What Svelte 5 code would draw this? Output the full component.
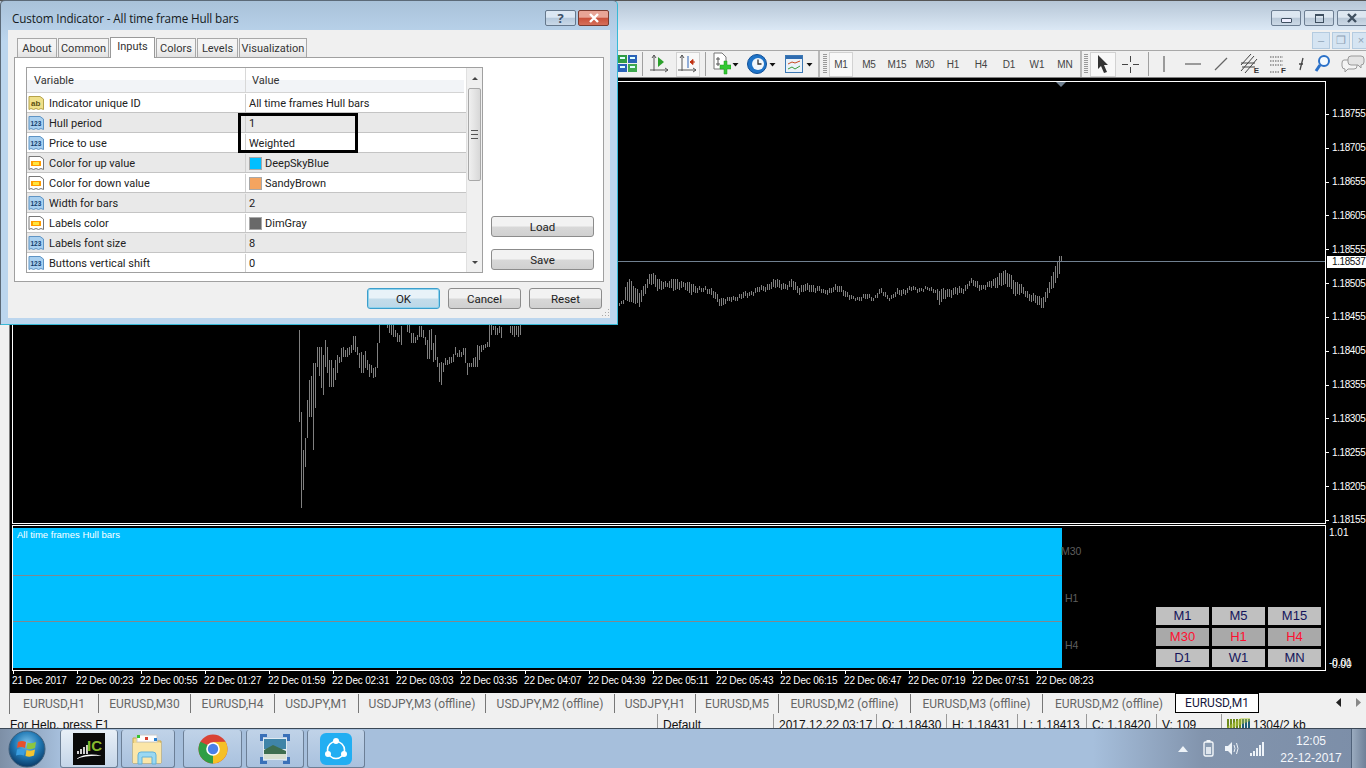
<script>
  const rows = [
    { icon: 'ab', name: 'Indicator unique ID', value: 'All time frames Hull bars' },
    { icon: 'num', name: 'Hull period', value: '1' },
    { icon: 'num', name: 'Price to use', value: 'Weighted' },
    { icon: 'color', name: 'Color for up value', value: 'DeepSkyBlue', swatch: '#00bfff' },
    { icon: 'color', name: 'Color for down value', value: 'SandyBrown', swatch: '#f4a460' },
    { icon: 'num', name: 'Width for bars', value: '2' },
    { icon: 'color', name: 'Labels color', value: 'DimGray', swatch: '#696969' },
    { icon: 'num', name: 'Labels font size', value: '8' },
    { icon: 'num', name: 'Buttons vertical shift', value: '0' }
  ];
  const dialogTabs = [
    { label: 'About', w: 40 }, { label: 'Common', w: 51 }, { label: 'Inputs', w: 45, active: true },
    { label: 'Colors', w: 40 }, { label: 'Levels', w: 41 }, { label: 'Visualization', w: 68 }
  ];
  const periods = ['M1', 'M5', 'M15', 'M30', 'H1', 'H4', 'D1', 'W1', 'MN'];
  const prices = ['1.18755', '1.18705', '1.18655', '1.18605', '1.18555', '1.18505', '1.18455', '1.18405', '1.18355', '1.18305', '1.18255', '1.18205', '1.18155'];
  const times = ['21 Dec 2017', '22 Dec 00:23', '22 Dec 00:55', '22 Dec 01:27', '22 Dec 01:59', '22 Dec 02:31', '22 Dec 03:03', '22 Dec 03:35', '22 Dec 04:07', '22 Dec 04:39', '22 Dec 05:11', '22 Dec 05:43', '22 Dec 06:15', '22 Dec 06:47', '22 Dec 07:19', '22 Dec 07:51', '22 Dec 08:23'];
  const chartTabs = [
    { label: 'EURUSD,H1', w: 89 }, { label: 'EURUSD,M30', w: 92 }, { label: 'EURUSD,H4', w: 84 }, { label: 'USDJPY,M1', w: 84 },
    { label: 'USDJPY,M3 (offline)', w: 127 }, { label: 'USDJPY,M2 (offline)', w: 129 }, { label: 'USDJPY,H1', w: 81 }, { label: 'EURUSD,M5', w: 83 },
    { label: 'EURUSD,M2 (offline)', w: 132 }, { label: 'EURUSD,M3 (offline)', w: 132 }, { label: 'EURUSD,M2 (offline)', w: 132 }
  ];
  const buttons = [
    { label: 'M1' }, { label: 'M5' }, { label: 'M15' },
    { label: 'M30', on: true }, { label: 'H1', on: true }, { label: 'H4', on: true },
    { label: 'D1' }, { label: 'W1' }, { label: 'MN' }
  ];
  const status = [
    { text: '2017.12.22 03:17', w: 103 }, { text: 'O: 1.18430', w: 70 }, { text: 'H: 1.18431', w: 71 },
    { text: 'L: 1.18413', w: 69 }, { text: 'C: 1.18420', w: 70 }, { text: 'V: 109', w: 65 }
  ];

  // early bars read off the screenshot: [x, top, bottom] in zoomed pixels
  const early = [[58,270,545],[64,515,805],[70,630,750],[76,595,680],[82,480,595],[88,420,530],[94,408,530],[100,370,630],[106,370,505],[112,320,380],[118,322,408],[124,320,445],[130,345,465],[136,300,380],[142,320,400],[148,360,440],[154,360,440],[160,385,440],[166,360,420],[172,345,400],[178,350,370],[184,325,365],[190,322,350],[196,330,350],[202,325,350],[208,320,345],[214,315,340],[220,288,330],[226,288,335],[232,320,345],[238,340,385],[244,335,398],[250,345,400],[256,333,385],[262,360,390],[268,372,412],[274,375,400],[280,385,415],[286,380,410],[292,310,385],[298,255,310],[322,255,265],[328,255,280],[334,255,285],[340,255,290],[346,270,290],[352,280,305],[358,285,305],[364,258,315],[382,255,275],[388,255,280],[394,278,310],[400,280,310],[406,290,310],[412,285,300],[418,258,290],[424,258,290],[430,270,295],[436,290,315],[442,300,358],[448,270,358],[454,268,330],[460,310,365],[466,285,360],[472,350,380],[478,368,425],[484,365,435],[490,368,395],[496,355,375],[502,360,375],[508,352,372],[514,350,368],[520,342,365],[526,320,345],[532,340,352],[538,330,352],[544,335,352],[550,325,345],[556,325,370],[562,368,405],[568,368,382],[574,368,382],[580,355,380],[586,350,380],[592,315,380],[598,318,360],[604,315,335],[610,315,330],[616,312,325],[622,305,320],[628,255,320],[634,255,285],[640,258,270],[646,258,285],[652,265,285],[658,258,278],[664,260,295],[690,258,280],[696,258,285],[702,258,290],[708,258,285],[714,258,292],[720,255,285]];
  // later bars as a control line: [x, middle, half height]
  const late = [[27,197,4],[40,185,5],[47,155,25],[57,147,35],[70,165,25],[88,180,20],[100,150,15],[115,122,14],[125,117,17],[140,130,18],[170,138,6],[190,130,18],[220,138,8],[240,140,18],[260,152,7],[285,145,6],[305,160,10],[330,185,12],[350,182,7],[380,172,6],[400,168,8],[430,155,6],[470,142,8],[500,130,13],[530,142,6],[545,130,14],[565,150,10],[600,142,10],[640,155,6],[690,145,10],[720,175,6],[750,175,5],[770,170,8],[790,175,5],[810,155,8],[840,175,5],[860,160,9],[900,148,6],[950,148,5],[975,150,5],[985,175,22],[1010,158,12],[1040,155,10],[1060,150,8],[1080,125,8],[1100,135,10],[1120,143,6],[1150,128,12],[1180,115,22],[1200,120,20],[1215,148,22],[1240,150,10],[1260,175,10],[1300,185,16],[1315,150,15],[1330,115,25],[1348,68,26],[1354,58,6]];

  function lateBar(u) {
    let i = 0;
    while (i < late.length - 2 && late[i + 1][0] < u) i++;
    const [a, m1, h1] = late[i];
    const [b, m2, h2] = late[i + 1];
    const t = (u - a) / (b - a);
    const wobble = Math.sin(u * 0.37) * 3 + Math.sin(u * 0.91) * 3;
    return [m1 + (m2 - m1) * t + wobble, h1 + (h2 - h1) * t];
  }

  let barsPath = '';
  for (const [u, top, bottom] of early) {
    const x = 280 + Math.round(u / 3) + 0.5;
    barsPath += `M${x} ${240 + Math.round(top / 3)}V${240 + Math.round(bottom / 3)}`;
  }
  for (let u = 27; u <= 1354; u += 6) {
    const [mid, half] = lateBar(u);
    const x = 610 + Math.round(u / 3) + 0.5;
    barsPath += `M${x} ${240 + Math.round((mid - half) / 3)}V${240 + Math.round((mid + half) / 3)}`;
  }
</script>

{#snippet rowIcon(kind)}
  <svg class="row-icon" width="17" height="16" viewBox="0 0 17 16">
    {#if kind === 'ab'}
      <path d="M1 1.5H12L15.5 4V14.5L13 13.5L10.5 14.5L8 13.5L5.5 14.5L3 13.5L1 14.5Z" fill="#efe08a" stroke="#b5a24a" />
      <text x="3" y="11" class="ic-ab">ab</text>
    {:else if kind === 'num'}
      <path d="M1 1.5H12L15.5 4V14.5L13 13.5L10.5 14.5L8 13.5L5.5 14.5L3 13.5L1 14.5Z" fill="#a9d0f0" stroke="#5f94c4" />
      <text x="2.5" y="11" class="ic-num">123</text>
    {:else}
      <path d="M1 1.5H12L15.5 4V14.5L13 13.5L10.5 14.5L8 13.5L5.5 14.5L3 13.5L1 14.5Z" fill="#fff" stroke="#777" />
      <rect x="3" y="6" width="10" height="5" fill="#ff9c00" />
      <rect x="5" y="7" width="6" height="3" fill="#ffe640" />
    {/if}
  </svg>
{/snippet}

{#snippet caret()}
  <svg class="caret" width="8" height="27" viewBox="0 0 8 27"><path d="M0.5 12H6.5L3.5 15.5Z" fill="#111" /></svg>
{/snippet}

<div class="app">
  <header class="titlebar">
    <div class="win-btns">
      <button class="win-btn"><span class="glyph-min"></span></button>
      <button class="win-btn"><span class="glyph-max"></span></button>
      <button class="win-btn close"><svg width="12" height="10" viewBox="0 0 12 10"><path d="M2 1L10 9M10 1L2 9" stroke="#3f4f60" stroke-width="2.4" /></svg></button>
    </div>
  </header>

  <div class="menubar">
    <div class="mdi-btns">
      <span class="mdi">–</span>
      <span class="mdi">❐</span>
      <span class="mdi">×</span>
    </div>
  </div>

  <div class="toolbar">
    <div class="tool" style="width:20px">
      <svg width="19" height="18" viewBox="0 0 19 18">
        <rect x="0" y="0" width="9" height="8" fill="#2f9c44" /><rect x="10" y="0" width="9" height="8" fill="#2a62b8" />
        <rect x="0" y="9" width="9" height="8" fill="#2a62b8" /><rect x="10" y="9" width="9" height="8" fill="#3fa84f" />
        <path d="M2 3H7M12 3H17M2 12H7M12 12H17" stroke="#dff" stroke-width="2" />
      </svg>
    </div>
    <span class="sep" style="margin-left:5px"></span>
    <div class="tool" style="width:24px;margin-left:5px">
      <svg width="22" height="22" viewBox="0 0 22 22">
        <path d="M5 2V18M1 17H19M5 2L3 5M5 2L7 5M19 17L16 15M19 17L16 19" stroke="#555" fill="none" />
        <path d="M9 4L15 9L9 14Z" fill="#2ca02c" />
      </svg>
    </div>
    <div class="tool on" style="width:24px;margin-left:4px">
      <svg width="22" height="22" viewBox="0 0 22 22">
        <path d="M5 2V18M1 17H19M5 2L3 5M5 2L7 5M19 17L16 15M19 17L16 19" stroke="#555" fill="none" />
        <path d="M11 3V15" stroke="#2a62b8" /><path d="M18 9H13M13 9L16 6.5V11.5Z" stroke="#c03010" fill="#c03010" />
      </svg>
    </div>
    <span class="sep" style="margin-left:5px"></span>
    <div class="tool" style="width:22px;margin-left:4px">
      <svg width="20" height="24" viewBox="0 0 20 24">
        <path d="M3 1H11L15 5V17H3Z" fill="#fff" stroke="#777" />
        <path d="M7 5V14M5 7H9M5 12H9" stroke="#555" />
        <path d="M9 13H13V9H16V13H20V17H16V22H13V17H9Z" fill="#32c832" stroke="#1c9a1c" stroke-width="0.5" />
      </svg>
    </div>
    {@render caret()}
    <div class="tool" style="width:22px;margin-left:7px">
      <svg width="22" height="24" viewBox="0 0 22 24">
        <circle cx="10" cy="12" r="9.5" fill="#1f74c8" stroke="#0f4f98" />
        <circle cx="11" cy="12" r="6" fill="#f2f7fb" />
        <path d="M11 7.5V12H14.5" stroke="#333" stroke-width="1.3" fill="none" />
      </svg>
    </div>
    {@render caret()}
    <div class="tool" style="width:22px;margin-left:7px">
      <svg width="20" height="19" viewBox="0 0 20 19">
        <rect x="0.5" y="0.5" width="17" height="17" fill="#eaf2f9" stroke="#3c78b4" />
        <rect x="1" y="1" width="16" height="3" fill="#2f6cb0" />
        <path d="M3 9L7 7L10 8L15 6" stroke="#c84a20" fill="none" />
        <path d="M3 14L7 12L10 14L15 11" stroke="#3a9a3a" fill="none" />
      </svg>
    </div>
    {@render caret()}
    <span class="sep thick" style="margin-left:4px"></span>
    <span class="grip" style="margin-left:3px"></span>
    <div class="periods">
      {#each periods as p, i}
        <div class="period" class:on={i === 0}>{p}</div>
      {/each}
    </div>
    <span class="sep thick" style="margin-left:1px"></span>
    <span class="grip" style="margin-left:2px"></span>
    <div class="tool on" style="width:26px;margin-left:2px">
      <svg width="14" height="20" viewBox="0 0 14 20"><path d="M2 1L12 11H8L11 18L8 19L5 12L2 15Z" fill="#333" /></svg>
    </div>
    <div class="tool" style="width:27px;margin-left:1px">
      <svg width="19" height="19" viewBox="0 0 19 19"><path d="M9.5 1V7M9.5 12V18M1 9.5H7M12 9.5H18" stroke="#444" /></svg>
    </div>
    <span class="sep" style="margin-left:4px"></span>
    <div class="tool" style="width:24px;margin-left:3px">
      <svg width="4" height="18" viewBox="0 0 4 18"><path d="M2 1V17" stroke="#444" /></svg>
    </div>
    <div class="tool" style="width:28px;margin-left:3px">
      <svg width="18" height="4" viewBox="0 0 18 4"><path d="M1 2H17" stroke="#444" /></svg>
    </div>
    <div class="tool" style="width:28px">
      <svg width="14" height="14" viewBox="0 0 14 14"><path d="M1 13L13 1" stroke="#666" stroke-width="1.2" /></svg>
    </div>
    <div class="tool fib" style="width:28px">
      <svg width="20" height="22" viewBox="0 0 20 22"><path d="M2 18L15 3M2 12L12 1M6 20L18 6M2 10H16M3 14H16" stroke="#444" fill="none" /></svg>
      <span class="fib-letter">E</span>
    </div>
    <div class="tool fib" style="width:28px">
      <svg width="18" height="20" viewBox="0 0 18 20"><path d="M2 3H15M2 7H15M2 11H15M2 18H12" stroke="#555" stroke-dasharray="1.5 1" /></svg>
      <span class="fib-letter f">F</span>
    </div>
    <div class="tool" style="width:22px">
      <svg width="8" height="14" viewBox="0 0 8 14"><path d="M5 1L2 13M1 7H5" stroke="#444" stroke-width="1.3" /></svg>
    </div>
    <div class="tool" style="width:18px">
      <svg width="17" height="20" viewBox="0 0 17 20"><circle cx="10" cy="7" r="5" fill="#f4faff" stroke="#2a70c8" stroke-width="2" /><path d="M6 11L2 17" stroke="#2a70c8" stroke-width="3" /></svg>
    </div>
    <div class="tool" style="width:26px;margin-left:9px">
      <svg width="24" height="20" viewBox="0 0 24 20">
        <path d="M3 6H13Q16 6 16 9V12Q16 15 13 15H7L4 18V15Q1 15 1 12V9Q1 6 3 6Z" fill="#f4f4f4" stroke="#999" />
        <path d="M10 2H20Q23 2 23 5V8Q23 11 20 11V14L17 11H10Q7 11 7 8V5Q7 2 10 2Z" fill="#e4e4e4" stroke="#999" />
      </svg>
    </div>
  </div>

  <div class="workspace">
    <div class="dock"></div>
    <div class="charts">
      <div class="pane main-pane">
        <div class="plot">
          <svg class="price-svg" width="1312" height="441" viewBox="13 82 1312 441">
            <path d={barsPath} stroke="#808080" fill="none" shape-rendering="crispEdges" />
            <path d="M13 261.5H1325" stroke="#708090" shape-rendering="crispEdges" />
            <path d="M1056 82H1066L1061 87Z" fill="#708090" />
          </svg>
        </div>
        <div class="axis">
          {#each prices as p}
            <div class="tick">{p}</div>
          {/each}
          <div class="bid">1.18537</div>
        </div>
      </div>
      <div class="pane sub-pane">
        <div class="plot sub-plot">
          <div class="hull">
            <div class="hull-row first"><span class="hull-name">All time frames Hull bars</span></div>
            <div class="hull-row middle"></div>
            <div class="hull-row last"></div>
          </div>
          <div class="hull-labels">
            <span class="m30">M30</span>
            <span>H1</span>
            <span>H4</span>
          </div>
          <div class="tf-buttons">
            {#each buttons as b}
              <div class="tf" class:on={b.on}>{b.label}</div>
            {/each}
          </div>
        </div>
        <div class="axis sub-axis">
          <span>1.01</span>
          <span class="low"><span class="over">0.00</span>-0.01</span>
        </div>
      </div>
      <div class="time-axis">
        {#each times as t}
          <div class="time">{t}</div>
        {/each}
      </div>
    </div>
  </div>

  <div class="chart-tabs">
    <div class="tabs-spacer"></div>
    {#each chartTabs as t}
      <div class="chart-tab" style="width:{t.w}px">{t.label}</div>
    {/each}
    <div class="chart-tab current">EURUSD,M1</div>
    <div class="tab-arrows">
      <svg width="6" height="9" viewBox="0 0 6 9"><path d="M5 0V9L0 4.5Z" fill="#222" /></svg>
      <svg width="6" height="9" viewBox="0 0 6 9"><path d="M1 0V9L6 4.5Z" fill="#888" /></svg>
    </div>
  </div>

  <div class="statusbar">
    <span class="st help">For Help, press F1</span>
    <span class="st dflt">Default</span>
    {#each status as s}
      <span class="st" style="width:{s.w}px">{s.text}</span>
    {/each}
    <span class="st net">
      <svg width="23" height="12" viewBox="0 0 23 12">
        <path d="M1 12V1M4 12V1M7 12V1M10 12V1M13 12V1" stroke="#6d8a1c" stroke-width="2" />
        <path d="M16 12V1M19 12V1M22 12V1" stroke="#1f5f78" stroke-width="2" />
        <path d="M0 12L23 3V0H14L0 9Z" fill="#b5c93a" opacity="0.5" />
      </svg>
      1304/2 kb
    </span>
  </div>

  <footer class="taskbar">
    <div class="orb-area">
      <svg width="38" height="38" viewBox="0 0 38 38">
        <defs>
          <radialGradient id="orb" cx="50%" cy="35%" r="65%"><stop offset="0" stop-color="#7ec3ea" /><stop offset="0.55" stop-color="#1f78b4" /><stop offset="1" stop-color="#0c3a66" /></radialGradient>
        </defs>
        <circle cx="19" cy="19" r="18" fill="url(#orb)" stroke="#3e5e7a" />
        <path d="M10 12Q14 10 18 12L17 18Q13 16 9 18Z" fill="#e8502c" />
        <path d="M19.5 12.5Q24 14 28 12L27 18Q23 20 18.5 18.5Z" fill="#8cc63f" />
        <path d="M9 19.5Q13 18 17 19.5L16 25.5Q12 24 8 25.5Z" fill="#3a9ee0" />
        <path d="M18.5 20Q23 21.5 27 19.5L26 25.5Q22 27.5 17.5 26Z" fill="#f4c430" />
      </svg>
    </div>
    <div class="task current">
      <svg width="32" height="32" viewBox="0 0 32 32">
        <rect width="32" height="32" fill="#0a0a0a" />
        <path d="M5 18V21M8 16V21M11 14V21M14 12V21" stroke="#d0d0d0" stroke-width="2" />
        <text x="14" y="18" class="ic-logo">IC</text>
        <path d="M3 26Q14 19 29 23Q15 22 3 26Z" fill="#fff" />
      </svg>
    </div>
    <div class="task folder">
      <svg width="32" height="32" viewBox="0 0 32 32">
        <path d="M1 5H12L14 8H29V30H1Z" fill="#f3d98b" stroke="#c9a84e" />
        <rect x="5" y="2" width="20" height="7" fill="#fff" stroke="#ccc" />
        <rect x="5" y="2" width="3" height="3" fill="#31c431" /><rect x="13" y="4" width="3" height="3" fill="#d84030" /><rect x="22" y="5" width="3" height="3" fill="#2a80d0" />
        <path d="M1 10H29V30H1Z" fill="#fbe6a8" />
        <path d="M6 31V22Q6 19 9 19H21Q24 19 24 22V31H20V24H10V31Z" fill="#9ad8f2" stroke="#63b1d8" />
      </svg>
    </div>
    <div class="task chrome">
      <svg width="30" height="30" viewBox="-15 -15 30 30">
        <circle r="14.5" fill="#d94335" />
        <path d="M-12.6 -7.2A14.5 14.5 0 0 0 0 14.5L7 2Z" fill="#2f9e44" />
        <path d="M0 14.5A14.5 14.5 0 0 0 12.6 -7.2L0 -7Z" fill="#f6c026" />
        <circle r="6.8" fill="#fff" /><circle r="5.2" fill="#4a80e8" />
      </svg>
    </div>
    <div class="task photos">
      <svg width="32" height="32" viewBox="0 0 32 32">
        <rect x="4" y="5" width="24" height="22" fill="#dfeaf2" />
        <rect x="5" y="6" width="22" height="10" fill="#3f84a8" />
        <path d="M5 17L14 12L27 18V26H5Z" fill="#3d6e50" />
        <rect x="5" y="21" width="22" height="5" fill="#d7dfd0" />
        <path d="M1 8V1H8V4H4V8ZM24 1H31V8H28V4H24ZM1 24H4V28H8V31H1ZM28 24H31V31H24V28H28Z" fill="#3a70b8" />
      </svg>
    </div>
    <div class="task">
      <svg width="32" height="32" viewBox="0 0 32 32">
        <rect width="32" height="32" rx="6" fill="#22aef2" />
        <circle cx="16" cy="17" r="8.5" fill="none" stroke="#fff" stroke-width="1.6" />
        <circle cx="16" cy="8" r="3" fill="#fff" /><circle cx="8" cy="21" r="3" fill="#fff" /><circle cx="24" cy="21" r="3" fill="#fff" />
      </svg>
    </div>
    <div class="tray">
      <svg width="10" height="6" viewBox="0 0 10 6"><path d="M5 0L10 6H0Z" fill="#eef3f8" /></svg>
      <svg class="t-batt" width="11" height="17" viewBox="0 0 11 17"><rect x="1" y="2" width="9" height="14" rx="1.5" fill="#8a9cb2" stroke="#f4f7fa" stroke-width="1.4" /><rect x="3.5" y="0" width="4" height="2" fill="#f4f7fa" /><rect x="3" y="7" width="5" height="7" fill="#dfe6ee" /></svg>
      <svg class="t-vol" width="16" height="15" viewBox="0 0 16 15"><path d="M1 5H4L8 1V14L4 10H1Z" fill="#eef3f8" /><path d="M10 4Q12 7.5 10 11M12.5 2Q15.5 7.5 12.5 13" stroke="#eef3f8" fill="none" /></svg>
      <svg class="t-net" width="16" height="14" viewBox="0 0 16 14"><path d="M1 11H3V14H1ZM4 9H6V14H4ZM7 6H9V14H7ZM10 3H12V14H10ZM13 0H15V14H13Z" fill="#eef3f8" /></svg>
      <div class="clock"><span>12:05</span><span>22-12-2017</span></div>
      <div class="show-desktop"></div>
    </div>
  </footer>

  <div class="dialog">
    <div class="dlg-title">
      <span>Custom Indicator - All time frame Hull bars</span>
      <div class="dlg-btns">
        <button class="dlg-btn help-btn">?</button>
        <button class="dlg-btn close-btn"><svg width="12" height="10" viewBox="0 0 12 10"><path d="M2 1L10 9M10 1L2 9" stroke="#fff" stroke-width="2.4" /></svg></button>
      </div>
    </div>
    <div class="dlg-body">
      <div class="dlg-tabs">
        {#each dialogTabs as t}
          <div class="dlg-tab" class:active={t.active} style="width:{t.w}px">{t.label}</div>
        {/each}
      </div>
      <div class="panel">
        <div class="list">
          <div class="list-main">
            <div class="list-head">
              <div class="col-name">Variable</div>
              <div class="col-value">Value</div>
            </div>
            {#each rows as r}
              <div class="list-row">
                <div class="cell-name">{@render rowIcon(r.icon)}<span>{r.name}</span></div>
                <div class="cell-value">
                  {#if r.swatch}<i class="swatch" style="background:{r.swatch}"></i>{/if}
                  <span>{r.value}</span>
                </div>
              </div>
            {/each}
          </div>
          <div class="scroll">
            <svg width="16" height="20" viewBox="0 0 16 20"><path d="M5 12H11L8 9Z" fill="#444" /></svg>
            <div class="thumb"><span class="thumb-grip"></span></div>
            <svg class="scroll-down" width="16" height="20" viewBox="0 0 16 20"><path d="M5 9H11L8 12Z" fill="#444" /></svg>
          </div>
        </div>
        <div class="side">
          <button class="btn wide">Load</button>
          <button class="btn wide">Save</button>
        </div>
      </div>
      <div class="dlg-actions">
        <button class="btn default">OK</button>
        <button class="btn">Cancel</button>
        <button class="btn">Reset</button>
      </div>
      <svg class="resize" width="10" height="10" viewBox="0 0 10 10"><path d="M8 1h1v1H8zM5 4h1v1H5zM8 4h1v1H8zM2 7h1v1H2zM5 7h1v1H5zM8 7h1v1H8z" fill="#aaa" /></svg>
    </div>
    <div class="highlight"></div>
  </div>
</div>

<style>
  :global(body) { margin: 0; background: #000; }
  button { font: inherit; padding: 0; }

  .app {
    position: relative;
    width: 1366px;
    height: 768px;
    overflow: hidden;
    display: flex;
    flex-direction: column;
    font-family: "Liberation Sans", Arial, sans-serif;
    font-size: 11px;
    color: #222;
  }

  .titlebar {
    height: 30px;
    flex-shrink: 0;
    display: flex;
    justify-content: flex-end;
    box-sizing: border-box;
    padding-top: 9px;
    border-top: 1px solid #555;
    background: linear-gradient(#b6c6d6, #dbe8f5);
  }
  .win-btns { display: flex; gap: 3px; margin-right: -6px; }
  .win-btn {
    width: 30px;
    height: 16px;
    display: flex;
    align-items: center;
    justify-content: center;
    border: 1px solid #6d7e92;
    border-radius: 2px;
    background: linear-gradient(#dde7f1 45%, #b9c8d8 50%, #ccd9e6);
  }
  .win-btn.close { width: 35px; padding-right: 6px; }
  .glyph-min { width: 9px; height: 3px; border: 1px solid #3f4f60; background: #eef; border-radius: 1px; margin-top: 4px; }
  .glyph-max { width: 7px; height: 6px; border: 1px solid #3f4f60; border-top-width: 2px; }

  .menubar {
    height: 20px;
    flex-shrink: 0;
    background: #f0f0f0;
    display: flex;
    justify-content: flex-end;
    padding-top: 2px;
    box-sizing: border-box;
  }
  .mdi-btns { display: flex; gap: 2px; margin-right: -4px; }
  .mdi {
    width: 16px;
    height: 15px;
    text-align: center;
    line-height: 15px;
    font-size: 11px;
    color: #8fa3b6;
    border: 1px solid #b4cbe0;
    background: #d5e4f2;
    box-sizing: content-box;
  }

  .toolbar {
    height: 28px;
    flex-shrink: 0;
    box-sizing: border-box;
    padding-left: 617px;
    display: flex;
    align-items: center;
    background: #f0f0f0;
    border-top: 1px solid #a8a8a8;
    border-bottom: 1px solid #808080;
  }
  .tool {
    height: 25px;
    flex-shrink: 0;
    box-sizing: border-box;
    display: flex;
    align-items: center;
    justify-content: center;
    position: relative;
  }
  .tool.on, .period.on {
    background: #f8f8f8;
    border: 1px solid #d2d2d2;
  }
  .caret { flex-shrink: 0; }
  .sep { width: 1px; height: 24px; background: #a0a0a0; flex-shrink: 0; }
  .sep.thick { width: 2px; height: 26px; background: #b8b8b8; }
  .grip {
    width: 4px;
    height: 20px;
    flex-shrink: 0;
    background: repeating-linear-gradient(#999 0 1px, transparent 1px 2px);
  }
  .periods { display: flex; margin-left: 0; }
  .period {
    width: 28px;
    height: 25px;
    box-sizing: border-box;
    display: flex;
    align-items: center;
    justify-content: center;
    font-size: 10px;
    color: #444;
    letter-spacing: -0.1px;
  }
  .period.on { width: 24px; margin: 0 2px; }
  .fib-letter { position: absolute; right: 4px; bottom: 2px; font-size: 8px; font-weight: 700; color: #333; }
  .fib-letter.f { right: 5px; }

  .workspace { flex: 1; display: flex; min-height: 0; background: #000; }
  .dock { width: 9px; flex-shrink: 0; background: #f0f0f0; border-right: 1px solid #7c7c7c; }
  .charts { flex: 1; padding: 3px 0 0 2px; min-width: 0; color: #fff; }
  .pane { display: flex; }
  .main-pane { height: 443px; margin-bottom: 1px; }
  .sub-pane { height: 146px; }
  .plot {
    width: 1314px;
    flex-shrink: 0;
    box-sizing: border-box;
    border: 1px solid #fff;
    position: relative;
    overflow: hidden;
  }
  .price-svg { display: block; }
  .axis {
    flex: 1;
    position: relative;
    padding-top: 16px;
    font-size: 10px;
    letter-spacing: -0.4px;
  }
  .tick {
    height: 33.83px;
    display: flex;
    align-items: center;
    padding-left: 6px;
    position: relative;
  }
  .tick::before {
    content: "";
    position: absolute;
    left: 0;
    top: 50%;
    width: 3px;
    height: 1px;
    background: #fff;
  }
  .bid {
    position: absolute;
    left: 1px;
    right: 0;
    top: 175px;
    height: 12px;
    line-height: 12px;
    padding-left: 5px;
    background: #fff;
    color: #111;
  }
  .sub-plot { display: flex; padding-top: 2px; }
  .hull {
    width: 1049px;
    height: 140px;
    flex-shrink: 0;
    display: flex;
    flex-direction: column;
    background: #00bfff;
  }
  .hull-row { flex-shrink: 0; box-sizing: border-box; }
  .hull-row.first { height: 48px; border-bottom: 1px solid #808890; }
  .hull-row.middle { height: 45px; }
  .hull-row.last { height: 47px; border-top: 1px solid #808890; }
  .hull-name { display: block; padding: 0 0 0 4px; font-size: 9.5px; line-height: 13px; color: #fff; }
  .hull-labels {
    position: absolute;
    left: 1048px;
    top: 19px;
    display: flex;
    flex-direction: column;
    gap: 34px;
    font-size: 10.5px;
    line-height: 13px;
    color: #5e5e5e;
    padding-left: 4px;
  }
  .hull-labels .m30 { margin-left: -4px; }
  .tf-buttons {
    position: absolute;
    right: 4px;
    bottom: 3px;
    display: grid;
    grid-template-columns: repeat(3, 53px);
    grid-auto-rows: 18px;
    column-gap: 3px;
    row-gap: 3px;
  }
  .tf {
    background: #c0c0c0;
    color: #14145a;
    text-align: center;
    font-size: 13px;
    line-height: 18px;
  }
  .tf.on { background: #a9a9a9; color: #ff1030; }
  .sub-axis {
    padding: 2px 0 0 3px;
    display: flex;
    flex-direction: column;
    justify-content: space-between;
    height: 146px;
    box-sizing: border-box;
    font-size: 10px;
    letter-spacing: 0;
  }
  .low { position: relative; margin-bottom: 3px; }
  .over { position: absolute; left: 3px; top: 2px; }
  .time-axis { display: flex; height: 22px; padding-top: 0; position: relative; }
  .time {
    width: 64px;
    flex-shrink: 0;
    font-size: 10px;
    letter-spacing: -0.18px;
    padding: 4px 0 0 0;
    line-height: 12px;
    white-space: nowrap;
    position: relative;
  }
  .time::before {
    content: "";
    position: absolute;
    left: 1px;
    top: 0;
    width: 1px;
    height: 3px;
    background: #fff;
  }

  .chart-tabs {
    height: 21px;
    flex-shrink: 0;
    display: flex;
    background: #f0f0f0;
    box-sizing: border-box;
    font-family: Roboto, sans-serif;
    font-size: 12px;
    color: #666;
    position: relative;
  }
  .tabs-spacer { width: 9px; border-right: 1px solid #777; box-sizing: content-box; margin-right: 0; }
  .chart-tab {
    flex-shrink: 0;
    box-sizing: border-box;
    display: flex;
    align-items: center;
    justify-content: center;
    height: 19px;
    margin-top: 1px;
    white-space: nowrap;
    border-right: 1px solid #777;
  }
  .chart-tab:nth-last-child(3) { border-right: 0; }
  .chart-tab.current {
    width: 84px;
    height: 20px;
    margin-top: 0;
    background: #fff;
    color: #16163c;
    border: 1px solid #000;
  }
  .tab-arrows { margin-left: auto; display: flex; gap: 13px; align-items: center; padding-right: 5px; height: 19px; }

  .statusbar {
    height: 14px;
    flex-shrink: 0;
    display: flex;
    overflow: hidden;
    background: #f0f0f0;
    font-size: 12px;
    color: #111;
  }
  .st {
    flex-shrink: 0;
    box-sizing: border-box;
    padding: 4px 0 0 5px;
    white-space: nowrap;
    border-left: 1px solid #999;
    line-height: 15px;
  }
  .help { width: 657px; padding-left: 10px; border-left: 0; }
  .dflt { width: 116px; }
  .net { display: flex; gap: 3px; align-items: flex-start; width: 140px; }

  .taskbar {
    height: 40px;
    flex-shrink: 0;
    box-sizing: border-box;
    display: flex;
    align-items: stretch;
    gap: 3px;
    border-top: 1px solid #3b4856;
    background: linear-gradient(90deg, #a6bfdc 80%, #8294ad 88%, #7c8ea8);
    z-index: 1;
  }
  .orb-area {
    width: 60px;
    flex-shrink: 0;
    margin-right: -3px;
    display: flex;
    align-items: center;
    justify-content: center;
    padding-right: 6px;
    box-sizing: border-box;
    background: linear-gradient(90deg, #7d8fa6, #a6bfdc);
  }
  .task {
    width: 58px;
    flex-shrink: 0;
    box-sizing: border-box;
    display: flex;
    align-items: center;
    justify-content: center;
    border: 1px solid #6c7f96;
    border-top: 0;
    border-radius: 3px;
    background: linear-gradient(#c0d3e8, #a9c1de);
    margin-top: 1px;
  }
  .task.current { background: linear-gradient(#e8eff7, #c4d5e8); }
  .task.folder { width: 54px; }
  .task.chrome { width: 59px; margin-left: 5px; }
  .task.photos { margin-left: 1px; }
  .tray {
    margin-left: auto;
    display: flex;
    align-items: center;
    color: #f4f7fb;
  }
  .t-batt { margin-left: 15px; }
  .t-vol { margin-left: 10px; }
  .t-net { margin-left: 9px; }
  .clock {
    width: 86px;
    padding-left: 6px;
    padding-top: 2px;
    box-sizing: border-box;
    display: flex;
    flex-direction: column;
    align-items: center;
    gap: 3px;
    font-size: 12px;
    line-height: 14px;
  }
  .show-desktop {
    width: 15px;
    align-self: stretch;
    background: linear-gradient(90deg, #9aabbf, #6f8098);
    border-left: 1px solid #50627a;
    box-sizing: border-box;
  }

  .dialog {
    position: absolute;
    left: 0;
    top: 0;
    width: 618px;
    height: 325px;
    box-sizing: border-box;
    display: flex;
    flex-direction: column;
    border: 1px solid #37b9d6;
    border-top-color: #5c6a78;
    border-left-color: #5c6a78;
    border-radius: 5px 5px 0 0;
    background: linear-gradient(#a9c2d9, #bcd6ee 40px);
    padding: 0 7px 6px 7px;
    z-index: 2;
    font-family: Roboto, "Liberation Sans", sans-serif;
  }
  .dlg-title {
    height: 29px;
    flex-shrink: 0;
    display: flex;
    align-items: center;
    justify-content: space-between;
    padding: 5px 0 0 4px;
    box-sizing: border-box;
    font-family: "Open Sans", sans-serif;
    font-size: 11.7px;
    letter-spacing: -0.12px;
    color: #141a20;
  }
  .dlg-btns { display: flex; gap: 2px; margin-right: 1px; margin-top: 4px; height: 16px; align-self: flex-start; }
  .dlg-btn {
    width: 31px;
    height: 16px;
    border: 1px solid #65788c;
    border-radius: 2px;
    display: flex;
    align-items: center;
    justify-content: center;
    font-size: 13px;
    font-weight: 700;
    color: #3c5068;
    background: linear-gradient(#dbe7f3 45%, #b4c8dc 50%, #cad9e8);
  }
  .close-btn { width: 31px; border-color: #7a3b30; background: linear-gradient(#e8a496 45%, #c9503a 50%, #d66f5a); }

  .dlg-body {
    flex: 1;
    position: relative;
    background: #f0f0f0;
    padding: 8px 6px 0 6px;
    display: flex;
    flex-direction: column;
    min-height: 0;
  }
  .dlg-tabs { display: flex; height: 19px; padding-left: 3px; position: relative; z-index: 1; }
  .dlg-tab {
    flex-shrink: 0;
    height: 19px;
    box-sizing: border-box;
    margin-right: 1px;
    text-align: center;
    line-height: 20px;
    background: linear-gradient(#f4f4f4 50%, #e2e2e2);
    border: 1px solid #a8a8a8;
    border-bottom: 0;
    white-space: nowrap;
    color: #333;
  }
  .dlg-tab.active {
    height: 21px;
    margin-top: -1px;
    background: #fff;
    line-height: 18px;
    border-color: #999;
  }
  .panel {
    height: 225px;
    box-sizing: border-box;
    background: #fff;
    border: 1px solid #a0a0a0;
    display: flex;
    padding: 9px 0 0 11px;
  }
  .list {
    width: 457px;
    height: 206px;
    flex-shrink: 0;
    box-sizing: border-box;
    display: flex;
    border: 1px solid #a0a0a0;
    overflow: hidden;
  }
  .list-main { width: 439px; flex-shrink: 0; }
  .list-head {
    height: 25px;
    display: flex;
    box-sizing: border-box;
    border-bottom: 1px solid #d4d4d4;
    background: linear-gradient(#fff 50%, #f2f4f7 52%);
    line-height: 26px;
    color: #333;
    margin-right: 2px;
  }
  .col-name { width: 219px; padding-left: 7px; box-sizing: border-box; border-right: 1px solid #d8d8d8; }
  .col-value { padding-left: 6px; }
  .list-row {
    height: 20px;
    padding-top: 1px;
    display: flex;
    box-sizing: border-box;
    border-bottom: 1px solid #c4c4c4;
    line-height: 19px;
    color: #222;
    white-space: nowrap;
  }
  .list-row:nth-child(odd) { background: #e9e9e9; }
  .cell-name { width: 219px; flex-shrink: 0; box-sizing: border-box; display: flex; align-items: center; gap: 4px; padding-left: 1px; border-right: 1px solid #cfcfcf; }
  .cell-value { padding-left: 3px; display: flex; align-items: center; }
  .row-icon { flex-shrink: 0; }
  .ic-ab { font: 700 8px "Liberation Sans", sans-serif; fill: #5c5010; }
  .ic-num { font: 700 6.5px "Liberation Sans", sans-serif; fill: #123c6c; }
  .ic-logo { font: 700 15px "Liberation Sans", sans-serif; fill: #86b82e; }
  .swatch { width: 11px; height: 11px; margin-right: 3px; border: 1px solid #a8a8a8; display: block; }

  .scroll {
    flex: 1;
    background: #f0f0f0;
    position: relative;
    border-left: 1px solid #e0e0e0;
  }
  .scroll svg { display: block; }
  .scroll-down { position: absolute; bottom: 0; left: 0; }
  .thumb {
    margin: 0 2px 0 1px;
    height: 93px;
    box-sizing: border-box;
    border: 1px solid #a8a8a8;
    border-radius: 2px;
    background: linear-gradient(90deg, #f0f0f0, #d8d8d8);
    display: flex;
    align-items: center;
    justify-content: center;
  }
  .thumb-grip { width: 7px; height: 7px; border-top: 1px solid #555; border-bottom: 1px solid #555; background: linear-gradient(transparent 3px, #555 3px 4px, transparent 4px); }

  .side { margin-left: 8px; padding-top: 149px; display: flex; flex-direction: column; gap: 12px; }
  .btn {
    width: 73px;
    height: 21px;
    border: 1px solid #8c8c8c;
    border-radius: 3px;
    background: linear-gradient(#f2f2f2 48%, #d8d8d8 52%, #d0d0d0);
    color: #222;
    font-size: 11.5px;
  }
  .btn.wide { width: 103px; }
  .btn.default { border-color: #3c9ecc; background: linear-gradient(#e8f2f8 48%, #c4dcea 52%, #bcd8e8); box-shadow: inset 0 0 0 1px #8fd2ec; }
  .dlg-actions { display: flex; justify-content: flex-end; gap: 8px; padding: 6px 2px 0 0; }
  .resize { position: absolute; right: 0; bottom: 0; }

  .highlight {
    position: absolute;
    left: 237px;
    top: 112px;
    width: 120px;
    height: 40px;
    box-sizing: border-box;
    border: 3px solid #000;
  }
</style>
